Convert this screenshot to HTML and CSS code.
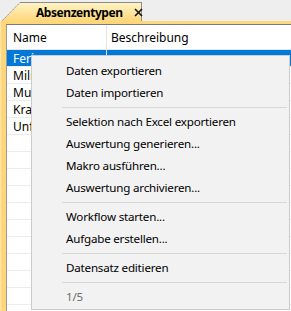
FILE: index.html
```html
<!DOCTYPE html>
<html lang="de">
<head>
  <meta charset="UTF-8">
  <title>Absenzentypen</title>
  <link rel="stylesheet" href="styles.css">
</head>
<body>
  <div class="window">
    <div class="tabbar">
      <div class="tab">
        <svg class="tab-slant" width="19" height="20" viewBox="0 0 19 20">
          <defs>
            <linearGradient id="tabGrad" x1="0" y1="0" x2="0" y2="1">
              <stop offset="0" stop-color="#fff3c4"/>
              <stop offset="1" stop-color="#ffd77a"/>
            </linearGradient>
          </defs>
          <polygon points="0,20 19,0.5 19,20" fill="url(#tabGrad)"/>
          <line x1="0.5" y1="19.5" x2="19" y2="0.5" stroke="#8c8c8c" stroke-width="1" stroke-dasharray="1.5 0.8"/>
        </svg>
        <div class="tab-body">
          <span class="tab-title">Absenzentypen</span>
          <svg class="tab-close" width="9" height="9" viewBox="0 0 9 9">
            <path d="M1 1 L8 8 M8 1 L1 8" stroke="#111" stroke-width="1.6" fill="none"/>
          </svg>
        </div>
      </div>
    </div>

    <div class="frame">
      <div class="grid">
        <div class="row head">
          <div class="cell name">Name</div>
          <div class="cell desc">Beschreibung</div>
        </div>
        <div class="row selected"><div class="cell name">Ferien</div><div class="cell desc"></div></div>
        <div class="row"><div class="cell name">Militär</div><div class="cell desc"></div></div>
        <div class="row"><div class="cell name">Mutter</div><div class="cell desc"></div></div>
        <div class="row"><div class="cell name">Krank</div><div class="cell desc"></div></div>
        <div class="row"><div class="cell name">Unfall</div><div class="cell desc"></div></div>
        <div class="row"><div class="cell name"></div><div class="cell desc"></div></div>
        <div class="row"><div class="cell name"></div><div class="cell desc"></div></div>
        <div class="row"><div class="cell name"></div><div class="cell desc"></div></div>
        <div class="row"><div class="cell name"></div><div class="cell desc"></div></div>
        <div class="row"><div class="cell name"></div><div class="cell desc"></div></div>
        <div class="row"><div class="cell name"></div><div class="cell desc"></div></div>
        <div class="row"><div class="cell name"></div><div class="cell desc"></div></div>
        <div class="row"><div class="cell name"></div><div class="cell desc"></div></div>
        <div class="row"><div class="cell name"></div><div class="cell desc"></div></div>
        <div class="row"><div class="cell name"></div><div class="cell desc"></div></div>
      </div>
    </div>

    <!-- Kontextmenü -->
    <ul class="menu">
      <li class="item">Daten exportieren</li>
      <li class="item">Daten importieren</li>
      <li class="sep"></li>
      <li class="item">Selektion nach Excel exportieren</li>
      <li class="item">Auswertung generieren...</li>
      <li class="item">Makro ausführen...</li>
      <li class="item">Auswertung archivieren...</li>
      <li class="sep"></li>
      <li class="item">Workflow starten...</li>
      <li class="item">Aufgabe erstellen...</li>
      <li class="sep"></li>
      <li class="item">Datensatz editieren</li>
      <li class="sep"></li>
      <li class="item disabled">1/5</li>
    </ul>
  </div>
</body>
</html>
```

FILE: styles.css
```css
* { box-sizing: border-box; }
body {
  margin: 0;
  background: #f0f0f0;
  font-family: "Noto Sans", "Open Sans", Arial, sans-serif;
  font-size: 12px;
  color: #000;
}
.window {
  position: relative;
  width: 291px; height: 311px;
  overflow: hidden;
  display: flex; flex-direction: column;
}

/* Tab */
.tabbar {
  height: 21px; padding-left: 1px;
  display: flex; align-items: flex-end;
  background: #eeeeee;
}
.tab { display: flex; align-items: flex-end; height: 19px; }
.tab-slant { display: block; margin-bottom: -1px; }
.tab-body {
  height: 19px; width: 122px;
  display: flex; align-items: center; gap: 11px;
  padding: 0 0 0 16px;
  background: linear-gradient(#fff3c4, #ffd77a);
  border-top: 1px solid #8c8c8c;
  border-right: 1px solid #8c8c8c;
}
.tab-title { font-weight: bold; letter-spacing: -0.45px; white-space: nowrap; }
.tab-close { display: block; flex-shrink: 0; }

/* Rahmen und Tabelle */
.frame {
  flex: 1;
  background: #ffd77a;
  padding: 3px 0 0 5px;
  border-left: 1px solid #fbe7b0;
}
.grid {
  height: 100%;
  background: #fff;
  border-top: 1px solid #7a7a7a;
  border-left: 1px solid #9a9a9a;
}
.row { display: flex; height: 17px; border-bottom: 1px solid #ececec; }
.row.head { height: 25px; border-bottom: 1px solid #e5e5e5; }
.cell { display: flex; align-items: center; white-space: nowrap; overflow: hidden; }
.cell.name { width: 100px; padding-left: 6px; border-right: 1px solid #e5e5e5; }
.cell.desc { flex: 1; padding-left: 4px; }
.row.selected { background: #0078d7; color: #fff; }

/* Kontextmenü */
.menu {
  position: absolute; left: 31px; top: 55px;
  width: 259px; height: 255px;
  margin: 0; padding: 4px 0 1px;
  list-style: none;
  background: #f2f2f2;
  border: 1px solid #cccccc;
  font-size: 11.6px;
  letter-spacing: -0.2px;
}
.item {
  height: 22px; line-height: 22px;
  padding-left: 34px;
  white-space: nowrap;
}
.item.disabled { color: #6d6d6d; }
.sep { height: 7px; padding: 3px 2px 0 30px; }
.sep::before { content: ""; display: block; height: 1px; background: #d7d7d7; }
```
